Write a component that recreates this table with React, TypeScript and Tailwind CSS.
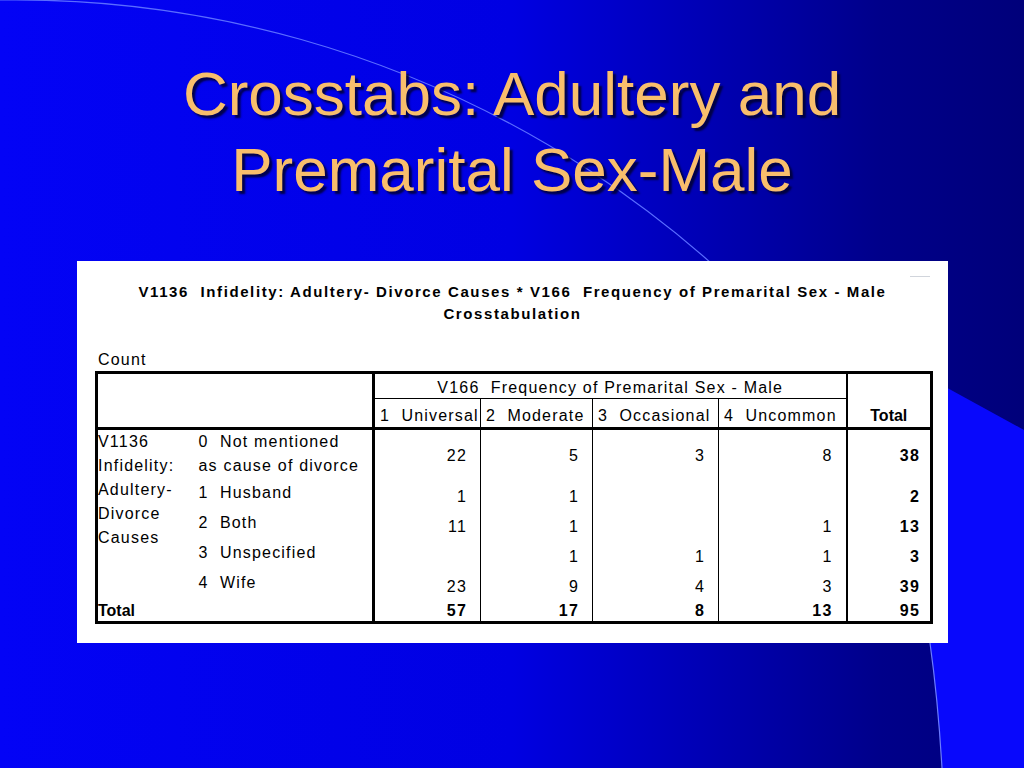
import React from 'react';

// slide: SPSS crosstab pasted onto a blue template
const font = "font-['Liberation_Sans',Arial,sans-serif]";

interface Row {
  label: string[];
  vals: string[];
  total: string;
  h: string;
}

const rows: Row[] = [
  { label: ['0  Not mentioned', 'as cause of divorce'], vals: ['22', '5', '3', '8'], total: '38', h: 'h-[52px]' },
  { label: ['1  Husband'], vals: ['1', '1', '', ''], total: '2', h: 'h-[30px]' },
  { label: ['2  Both'], vals: ['11', '1', '', '1'], total: '13', h: 'h-[30px]' },
  { label: ['3  Unspecified'], vals: ['', '1', '1', '1'], total: '3', h: 'h-[30px]' },
  { label: ['4  Wife'], vals: ['23', '9', '4', '3'], total: '39', h: 'h-[30px]' },
];

const colTotals = ['57', '17', '8', '13'];
const headers = ['1  Universal', '2  Moderate', '3  Occasional', '4  Uncommon'];

const Background: React.FC = () => (
  <svg className="absolute inset-0" width="1024" height="768" viewBox="0 0 1024 768">
    <defs>
      <linearGradient id="bg" x1="0" y1="0.5" x2="1" y2="0.5">
        <stop offset="0" stopColor="#0303f6" />
        <stop offset="0.5" stopColor="#0000e2" />
        <stop offset="0.68" stopColor="#0000b6" />
        <stop offset="0.86" stopColor="#00008a" />
        <stop offset="1" stopColor="#00007a" />
      </linearGradient>
    </defs>
    <rect width="1024" height="768" fill="url(#bg)" />
    <path d="M 0 0 A 1051 1051 0 0 1 984 643" fill="none" stroke="#5a6cff" strokeWidth="1.2" />
    <path d="M 1024 430 L 900 362 Q 925 500 930 643 Q 938 700 942 768 L 1024 768 Z" fill="#0808fc" />
    <path d="M 930 643 Q 938 700 942 768" fill="none" stroke="#6c7cff" strokeWidth="1.2" />
  </svg>
);

const App: React.FC = () => {
  return (
    <div className={`relative w-[1024px] h-[768px] overflow-hidden ${font}`}>
      <Background />
      <div className="relative">
        <h1 className="pt-[56px] text-center text-[62px] leading-[76px] text-[#f8be6c] [text-shadow:3px_3px_2px_rgba(0,0,48,0.85)]">
          Crosstabs: Adultery and
          <br />
          Premarital Sex-Male
        </h1>

        <div className="relative mt-[53px] ml-[77px] w-[871px] h-[382px] bg-white pt-[20px] text-black">
          <div className="absolute right-[18px] top-[15px] w-[20px] h-px bg-gray-300" />
          <div className="text-center font-bold text-[15px] leading-[22px] tracking-[1.6px] whitespace-pre">
            {'V1136  Infidelity: Adultery- Divorce Causes * V166  Frequency of Premarital Sex - Male'}
            <br />
            Crosstabulation
          </div>
          <div className="mt-[25px] ml-[21px] text-[16px] leading-[20px] tracking-[1.2px]">Count</div>

          <table className="mt-px ml-[18px] w-[835px] table-fixed border-collapse border-[3px] border-black text-[16px] tracking-[1.2px]">
            <colgroup>
              <col className="w-[101px]" />
              <col className="w-[176px]" />
              <col className="w-[107px]" />
              <col className="w-[112px]" />
              <col className="w-[126px]" />
              <col className="w-[128px]" />
              <col className="w-[85px]" />
            </colgroup>
            <tbody>
              <tr className="h-[26px]">
                <td colSpan={2} rowSpan={2} className="p-0 border-r-[3px] border-b-[3px] border-black" />
                <td colSpan={4} className="p-0 border-b border-black text-center align-bottom leading-[20px] whitespace-pre">
                  {'V166  Frequency of Premarital Sex - Male'}
                </td>
                <td rowSpan={2} className="p-0 pb-[1px] border-l-2 border-b-[3px] border-black text-center align-bottom font-bold leading-[20px] tracking-normal">
                  Total
                </td>
              </tr>
              <tr className="h-[30px]">
                {headers.map((h, i) => (
                  <td
                    key={h}
                    className={`p-0 pl-[5px] pb-[1px] border-b-[3px] border-black align-bottom leading-[20px] whitespace-pre ${i > 0 ? 'border-l' : ''}`}
                  >
                    {h}
                  </td>
                ))}
              </tr>

              {rows.map((r, ri) => (
                <tr key={ri} className={r.h}>
                  {ri === 0 && (
                    <td rowSpan={5} className="p-0 align-top leading-[24px]">
                      <div>V1136</div>
                      <div>Infidelity:</div>
                      <div>Adultery-</div>
                      <div>Divorce</div>
                      <div>Causes</div>
                    </td>
                  )}
                  <td className="p-0 pl-[1px] align-top leading-[24px] whitespace-pre">
                    {r.label.map((l) => (
                      <div key={l}>{l}</div>
                    ))}
                  </td>
                  {r.vals.map((v, vi) => (
                    <td
                      key={vi}
                      className={`p-0 pr-[13px] pt-[2px] text-right align-middle border-black ${vi === 0 ? 'border-l-[3px]' : 'border-l'}`}
                    >
                      {v}
                    </td>
                  ))}
                  <td className="p-0 pr-[10px] pt-[2px] text-right align-middle font-bold border-l-2 border-black">{r.total}</td>
                </tr>
              ))}

              <tr className="h-[20px]">
                <td colSpan={2} className="p-0 font-bold leading-[20px] tracking-normal align-bottom">
                  Total
                </td>
                {colTotals.map((v, vi) => (
                  <td
                    key={vi}
                    className={`p-0 pr-[13px] text-right align-bottom font-bold leading-[20px] border-black ${vi === 0 ? 'border-l-[3px]' : 'border-l'}`}
                  >
                    {v}
                  </td>
                ))}
                <td className="p-0 pr-[10px] text-right align-bottom font-bold leading-[20px] border-l-2 border-black">95</td>
              </tr>
            </tbody>
          </table>
        </div>
      </div>
    </div>
  );
};

export default App;
